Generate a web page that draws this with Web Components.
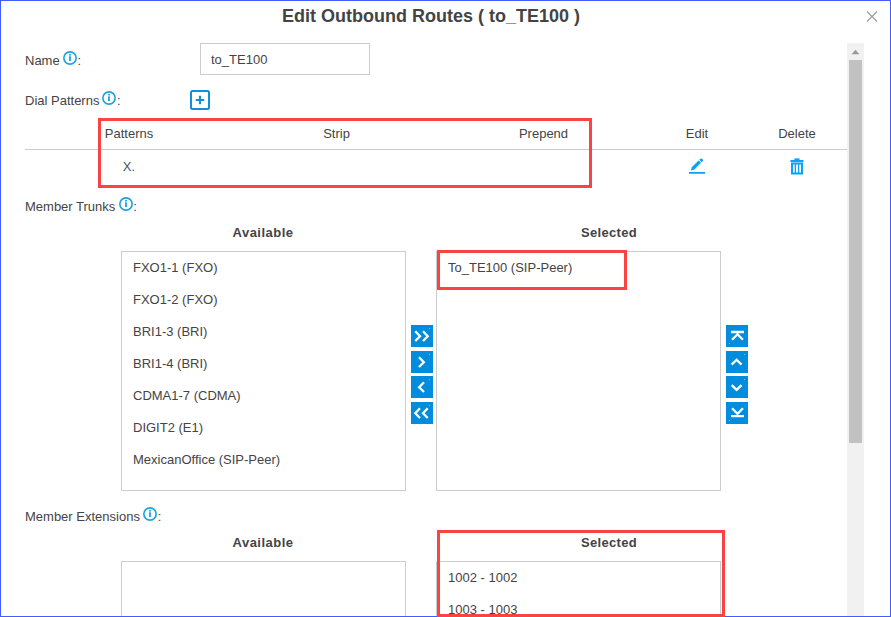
<!DOCTYPE html>
<html lang="en">
<head>
<meta charset="utf-8">
<title>Edit Outbound Routes</title>
<style>
html,body{margin:0;height:100%;overflow:hidden;background:#fff}
body{font:13px/16px "Liberation Sans",Arial,sans-serif;color:#444}
</style>
</head>
<body>
<route-dialog heading="Edit Outbound Routes ( to_TE100 )">
  <form-row label="Name" style="height:32px"><text-box value="to_TE100"></text-box></form-row>
  <form-row label="Dial Patterns" tight style="height:20px;margin-top:15px;--field:165px;--top:1px;--icon-top:-1px"><add-button></add-button></form-row>
  <pattern-table></pattern-table>
  <form-row label="Member Trunks" style="height:20px;margin-top:13px"></form-row>
  <dual-list available="FXO1-1 (FXO)|FXO1-2 (FXO)|BRI1-3 (BRI)|BRI1-4 (BRI)|CDMA1-7 (CDMA)|DIGIT2 (E1)|MexicanOffice (SIP-Peer)" selected="To_TE100 (SIP-Peer)"></dual-list>
  <form-row label="Member Extensions" style="height:20px;margin-top:14px"></form-row>
  <dual-list available="" selected="1002 - 1002|1003 - 1003"></dual-list>
</route-dialog>
<mark-box style="left:98px;top:118px;width:494px;height:70px"></mark-box>
<mark-box style="left:437px;top:250px;width:190px;height:40px"></mark-box>
<mark-box style="left:437px;top:530px;width:288px;height:87px"></mark-box>
<script>
const define=(name,render)=>customElements.define(name,class extends HTMLElement{
  constructor(){super();this.attachShadow({mode:'open'});}
  connectedCallback(){this.shadowRoot.innerHTML=render(this);}
});

define('info-icon',()=>`<style>:host{display:block;width:14px;height:14px}svg{display:block}</style>
<svg width="14" height="14" viewBox="0 0 14 14"><circle cx="7" cy="7" r="6.15" fill="none" stroke="#1aa3dc" stroke-width="1.6"/><path d="M7 3v1.5M7 5.2v4.8" stroke="#1aa3dc" stroke-width="1.8"/></svg>`);

define('form-row',el=>`<style>
:host{display:flex;align-items:center}
.label{display:flex;width:var(--field,175px);height:18px;white-space:nowrap;padding-top:var(--top,2px);box-sizing:border-box}
.label span{padding-top:1px;height:15px}
info-icon{margin:var(--icon-top,-1px) .5px 0 ${el.hasAttribute('tight')?'3px':'3.4px'}}
</style><div class="label"><span>${el.getAttribute('label')}</span><info-icon></info-icon><span>:</span></div><slot></slot>`);

define('text-box',el=>`<style>
:host{display:flex;align-items:center;box-sizing:border-box;width:170px;height:32px;border:1px solid #ccc;padding:2px 0 0 10px}
</style><span>${el.getAttribute('value')}</span>`);

define('add-button',()=>`<style>:host{display:block}svg{display:block}</style>
<svg width="20" height="20" viewBox="0 0 20 20"><rect x="1" y="1" width="18" height="18" rx="1.5" fill="none" stroke="#128edb" stroke-width="2"/><path d="M10 5.8v8.4M5.8 10h8.4" stroke="#128edb" stroke-width="2.1"/></svg>`);

define('pattern-table',()=>`<style>
:host{display:block;margin-top:7px}
.r{display:grid;grid-template-columns:208px 207px 207px 100px 100px;align-items:center;justify-items:center;height:32px}
.h{border-bottom:1px solid #ccc}.r span{padding-top:2px}
.v{color:#445566}svg{display:block}
</style>
<div class="r h"><span>Patterns</span><span>Strip</span><span>Prepend</span><span>Edit</span><span>Delete</span></div>
<div class="r"><span class="v">X.</span><span></span><span></span>
<svg width="16" height="16" viewBox="0 0 16 16" fill="#0aa1fb"><path d="M0 14.1h16v1.7H0zM2 12.4l.7-3.1 6.9-6.9 2.4 2.4-6.9 6.9zM10.3 1.8l1-1q.9-.8 1.8 0l.6.6q.8.9 0 1.8l-1 1z"/></svg>
<svg width="14" height="17" viewBox="0 0 14 17" fill="none" stroke="#0aa1fb"><path d="M.5 3h13" stroke-width="2"/><path d="M4.5 1.2h5" stroke-width="1.6"/><path d="M2 5.5h10v10H2z" stroke-width="2"/><path d="M5.4 5v10M8.6 5v10" stroke-width="1.4"/></svg></div>`);

define('option-list',el=>`<style>
:host{display:block;box-sizing:border-box;width:285px;height:240px;border:1px solid #ccc}
div{height:32px;line-height:31px;padding-left:11px}
</style>${(el.getAttribute('items')||'').split('|').filter(Boolean).map(t=>`<div>${t}</div>`).join('')}`);

const glyphs={
 allRight:'M4.3 6.3l4.7 4.9L4.3 16M12 6.3l4.7 4.9L12 16',
 right:'M8 6.3l4.8 4.9L8 16',
 left:'M13 6.3l-4.8 4.9L13 16',
 allLeft:'M9 6.3l-4.7 4.9L9 16M16.7 6.3L12 11.2l4.7 4.8',
 top:'M5 7h13M6 14.8l5.5-5.5 5.5 5.5',
 up:'M5.7 13.6l4.9-4.8 4.9 4.8',
 down:'M5.7 9.1l4.9 4.8 4.9-4.8',
 bottom:'M5 14.2h13M6 6.3l5.5 5.5 5.5-5.5'
};
define('move-button',el=>`<style>:host{display:block;width:22px;height:22px;background:#018cdd}svg{display:block}</style>
<svg width="22" height="22" viewBox="0 0 22 22" fill="none" stroke="#fff" stroke-width="2.3"><path d="${glyphs[el.getAttribute('kind')]}"/><path d="${/top|bottom/.test(el.getAttribute('kind'))?'M3 18.5h1':'M18 3.5h1'}" stroke="#7cc6ee" stroke-width="1"/></svg>`);

const buttons=kinds=>`<div class="buttons">${kinds.map(k=>`<move-button kind="${k}"></move-button>`).join('')}</div>`;
define('dual-list',el=>`<style>
:host{display:block;padding:7px 0 0 96px}
.heads{display:flex;height:29px;line-height:22px;font-weight:bold;text-align:center;letter-spacing:.3px}
.heads span:first-child{width:284px;margin-right:1px;letter-spacing:.48px}.heads span:last-child{width:346px;margin-left:30px}
.lists{display:flex}
.buttons{display:grid;grid-template-rows:26px 25px 26px 22px;margin:74px 3px 0 5px;height:99px}
</style>
<div class="heads"><span>Available</span><span>Selected</span></div>
<div class="lists"><option-list items="${el.getAttribute('available')}"></option-list>${buttons(['allRight','right','left','allLeft'])}
<option-list items="${el.getAttribute('selected')}"></option-list>${buttons(['top','up','down','bottom'])}</div>`);

define('scroll-track',()=>`<style>
:host{display:flex;flex-direction:column;align-items:center;width:17px;background:#f1f1f1}
svg{display:block;height:17px}.thumb{width:13px;height:383px;background:#c1c1c1}
</style><svg width="17" height="17" viewBox="0 0 17 17"><path d="M4.6 11.2l3.9-4.4 3.9 4.4z" fill="#999"/></svg><div class="thumb"></div>`);

define('route-dialog',el=>`<style>
:host{display:flex;flex-direction:column;box-sizing:border-box;width:891px;height:617px;border:1px solid #425cff;background:#fff;overflow:hidden}
header{display:flex;height:42px;flex:none}
h1{margin:0;flex:1;padding:5px 5px 0 0;text-align:center;font-size:18px;line-height:20px;font-weight:bold}
header svg{margin:10px 12px 0 0}
.body{display:flex;flex:1;min-height:0}
main{width:822px;padding-left:24px}
</style>
<header><h1>${el.getAttribute('heading')}</h1><svg width="12" height="12" viewBox="0 0 12 12" stroke="#999" stroke-width="1.1"><path d="M1 .5l10 10M11 .5l-10 10"/></svg></header>
<div class="body"><main><slot></slot></main><scroll-track></scroll-track></div>`);

define('mark-box',()=>`<style>:host{position:absolute;box-sizing:border-box;border:3px solid #fb4343}</style>`);
</script>
</body>
</html>
